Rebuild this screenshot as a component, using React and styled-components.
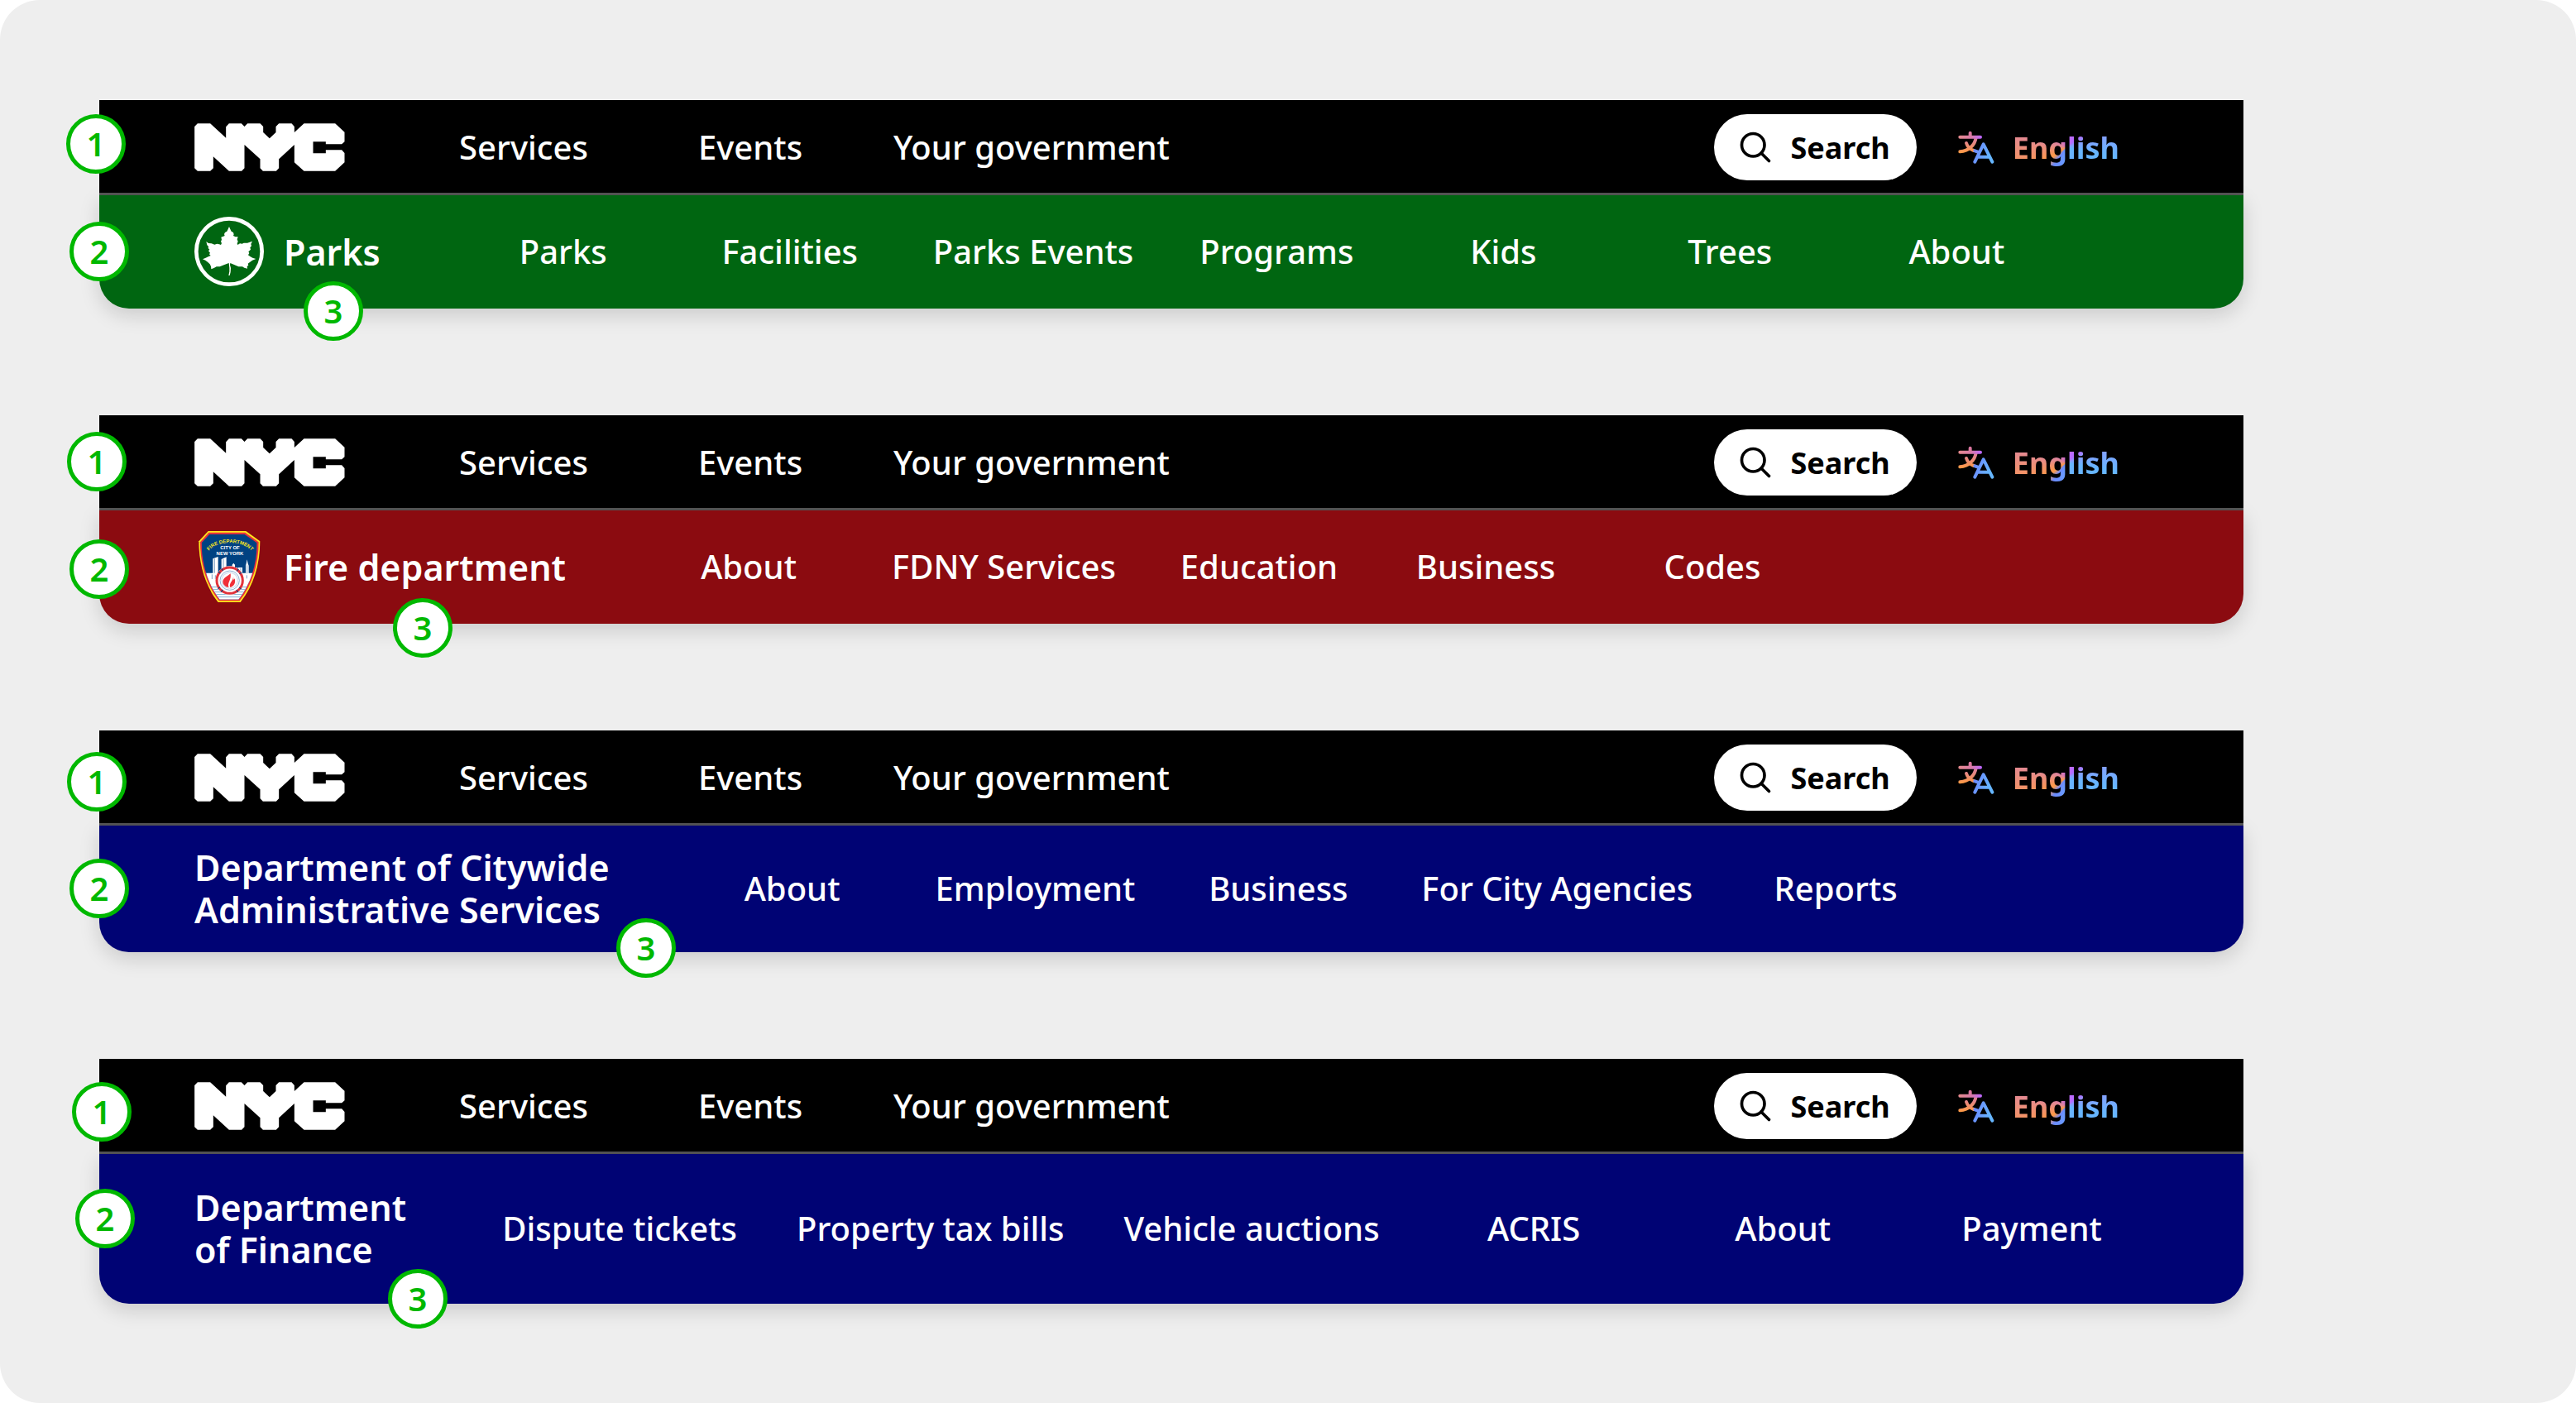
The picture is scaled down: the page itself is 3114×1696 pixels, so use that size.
import React from 'react';
import styled, { createGlobalStyle } from 'styled-components';

const agencies = [
  {
    name: ['Parks'],
    emblem: 'parks',
    color: '#006611',
    height: 137,
    links: ['Parks', 'Facilities', 'Parks Events', 'Programs', 'Kids', 'Trees', 'About'],
    markers: [[-40, 17], [-36, 147], [247, 219]],
  },
  {
    name: ['Fire department'],
    emblem: 'fire',
    color: '#8b0b10',
    height: 137,
    links: ['About', 'FDNY Services', 'Education', 'Business', 'Codes'],
    markers: [[-39, 20], [-36, 150], [355, 221]],
  },
  {
    name: ['Department of Citywide', 'Administrative Services'],
    color: '#000374',
    height: 153,
    links: ['About', 'Employment', 'Business', 'For City Agencies', 'Reports'],
    markers: [[-39, 26], [-36, 155], [625, 227]],
  },
  {
    name: ['Department', 'of Finance'],
    color: '#000374',
    height: 181,
    gap: 80,
    cell: 301,
    links: ['Dispute tickets', 'Property tax bills', 'Vehicle auctions', 'ACRIS', 'About', 'Payment'],
    markers: [[-33, 28], [-29, 157], [349, 254]],
  },
];

const NycLogo = () => (
  <svg width="182" height="58" viewBox="46 57 545 174" role="img" aria-label="NYC">
    <path
      fill="#fff"
      d="M57 58H103L160 110V70L171 58H216L227 69L238 58H284L295 69V90L318 112L341 90V69L352 58H398L408 69V90L443 58H556L590 89V124L580 133H522V124H476V166H522V154H580L590 165V199L556 230H443L408 199V135L352 187V220L342 230H294L284 220V187L227 135V220L217 230H171L114 178V220L103 230H57L46 220V69Z"
    />
  </svg>
);

const SearchIcon = () => (
  <svg width="44" height="44" viewBox="0 0 24 24" fill="none" stroke="#000" strokeWidth="2" strokeLinecap="round">
    <circle cx="10.5" cy="10.5" r="7.5" />
    <path d="M21 21l-5.2-5.2" />
  </svg>
);

const TranslateIcon = () => (
  <svg width="44" height="40" viewBox="76 52 132 120" fill="none" strokeWidth="12" strokeLinecap="round" strokeLinejoin="round">
    <defs>
      <linearGradient id="warm" gradientUnits="userSpaceOnUse" x1="112" y1="60" x2="112" y2="132">
        <stop offset="0" stopColor="#d9749f" />
        <stop offset="0.4" stopColor="#e0828f" />
        <stop offset="1" stopColor="#ff9a45" />
      </linearGradient>
      <linearGradient id="bar" gradientUnits="userSpaceOnUse" x1="80" y1="60" x2="162" y2="75">
        <stop offset="0" stopColor="#e58a8c" />
        <stop offset="0.55" stopColor="#d87aa8" />
        <stop offset="1" stopColor="#bb66ff" />
      </linearGradient>
      <linearGradient id="cool" gradientUnits="userSpaceOnUse" x1="135" y1="130" x2="190" y2="150">
        <stop offset="0" stopColor="#6b8bff" />
        <stop offset="1" stopColor="#66b6ff" />
      </linearGradient>
    </defs>
    <path stroke="url(#warm)" d="M120 60V73M141 77C137 103 116 126 83 128M106 97C110 110 119 119 133 124" />
    <path stroke="url(#bar)" d="M83 75H157" />
    <path stroke="url(#cool)" d="M137 125L148 129M137 165L168 101L200 165M149 147H188" />
  </svg>
);

const ParksEmblem = () => (
  <svg width="84" height="84" viewBox="48 39 252 252" role="img" aria-label="Parks emblem">
    <circle cx="174" cy="165" r="119" fill="none" stroke="#fff" strokeWidth="14" />
    <path
      fill="#fff"
      d="M174 75L178 84L182 92L189 96L191 103L189 108L197 112L206 112L203 121L206 129L203 136L205 141L213 136L221 137L227 134L240 134L258 128L253 138L255 145L250 151L252 158L244 166L247 171L243 178L250 183L259 188L271 192L258 197L250 203L242 209L244 215L239 219L240 227L229 224L222 220L208 220L194 214L178 207L177 214L180 225L179 240L176 252L172 252L175 238L175 224L173 207L155 214L140 220L128 220L119 225L109 229L108 219L104 211L96 203L88 197L78 193L89 188L98 184L107 180L102 175L105 170L99 163L103 158L98 153L99 147L94 142L91 129L99 135L110 136L121 140L130 137L138 139L144 141L147 135L144 129L147 122L145 113L153 110L158 108L156 102L159 96L166 92L170 84Z"
    />
  </svg>
);

const FireEmblem = () => (
  <svg width="84" height="86" viewBox="48 36 252 258" role="img" aria-label="Fire department shield">
    <defs>
      <clipPath id="shield">
        <path d="M103 47H229L275 79C275 155 252 230 208 284H140C97 230 74 155 74 79Z" />
      </clipPath>
      <path id="arch" d="M96 116C118 66 234 66 260 116" />
    </defs>
    <path fill="#ffe81a" d="M98 36H235L286 73C286 158 262 236 215 294H134C88 236 64 158 64 73Z" />
    <path fill="#e8323c" d="M100 41H232L281 76C281 157 257 233 212 289H137C92 233 69 157 69 76Z" />
    <g clipPath="url(#shield)">
      <path fill="#004282" d="M60 36H290V294H60Z" />
      <path fill="#fff" d="M60 188H290V294H60Z" />
      <path fill="#fff" d="M115 136L134 129V190H115ZM146 138L164 130V190H146ZM185 158L190 152L195 158V168H205V190H178V164H185ZM207 168H222V190H207ZM236 154L239 139L242 154L245 161V192H234V161Z" />
      <path fill="none" stroke="#7d9fc4" strokeWidth="3" d="M121 136V188M153 138V188M216 170V188M239 160V190M112 193V210M124 196V210M238 196V208" />
      <path fill="none" stroke="#7eb0d2" strokeWidth="3" d="M90 239H262M92 248H258M98 257H252M108 266H244M114 275H236" />
      <circle cx="176" cy="215" r="52" fill="#fff" />
      <circle cx="176" cy="215" r="47" fill="none" stroke="#e1343c" strokeWidth="9" />
      <circle cx="176" cy="215" r="47" fill="none" stroke="#004282" strokeWidth="10" strokeDasharray="3 12 3 55.8" strokeDashoffset="-28" />
      <circle cx="176" cy="215" r="35" fill="none" stroke="#8eb4d6" strokeWidth="3" />
      <circle cx="176" cy="215" r="29" fill="none" stroke="#d5e1ee" strokeWidth="4" />
      <path fill="#f02f38" d="M179 190C166 201 153 205 151 219C151 230 161 240 173 240C165 226 183 213 179 190Z" />
      <path fill="#f02f38" d="M189 200C190 216 171 225 178 240C191 237 199 224 194 208L190 213Z" />
    </g>
    <g fontFamily="Liberation Sans, Arial, sans-serif" fontWeight="700" textAnchor="middle">
      <text fill="#ffe81a" fontSize="18">
        <textPath href="#arch" startOffset="50%">FIRE DEPARTMENT</textPath>
      </text>
      <text fill="#fff" fontSize="18" x="177" y="101">CITY OF</text>
      <text fill="#fff" fontSize="18" x="177" y="123">NEW YORK</text>
    </g>
  </svg>
);

const emblems = { parks: ParksEmblem, fire: FireEmblem };

const Header = ({ agency }) => {
  const Emblem = emblems[agency.emblem];
  return (
    <Panel>
      <TopBar>
        <HomeLink href="#"><NycLogo /></HomeLink>
        <Nav aria-label="City">
          {['Services', 'Events', 'Your government'].map(label => (
            <NavLink key={label} href="#">{label}</NavLink>
          ))}
        </Nav>
        <Tools>
          <SearchButton type="button"><SearchIcon />Search</SearchButton>
          <LanguageButton type="button">
            <TranslateIcon />
            <LanguageName>English</LanguageName>
          </LanguageButton>
        </Tools>
      </TopBar>
      <AgencyBar $color={agency.color} $height={agency.height} $gap={agency.gap}>
        <Brand href="#">
          {Emblem && <Emblem />}
          <span>
            {agency.name.map(line => <BrandLine key={line}>{line}</BrandLine>)}
          </span>
        </Brand>
        <Nav aria-label={agency.name.join(' ')}>
          {agency.links.map(label => (
            <NavLink key={label} href="#" $cell={agency.cell}>{label}</NavLink>
          ))}
        </Nav>
      </AgencyBar>
      {agency.markers.map(([x, y], index) => (
        <Marker key={index} $x={x} $y={y}>{index + 1}</Marker>
      ))}
    </Panel>
  );
};

const App = () => (
  <>
    <GlobalStyle />
    <Board>
      {agencies.map(agency => <Header key={agency.name[0]} agency={agency} />)}
    </Board>
  </>
);

const GlobalStyle = createGlobalStyle`
  * {
    box-sizing: border-box;
  }

  body {
    margin: 0;
    background: #fff;
    font-family: "Noto Sans", sans-serif;
  }

  svg {
    display: block;
    flex: none;
  }
`;

const Board = styled.main`
  display: flex;
  flex-direction: column;
  gap: 129px;
  padding: 121px 402px 120px 120px;
  background: #eee;
  border-radius: 48px;
`;

const Panel = styled.header`
  position: relative;
`;

const TopBar = styled.div`
  display: flex;
  align-items: center;
  gap: 79px;
  min-height: 115px;
  padding: 0 118px 1px 115px;
  background: #000;
  box-shadow: inset 0 -3px #555;
`;

const AgencyBar = styled.div`
  display: flex;
  align-items: center;
  gap: ${props => props.$gap || 84}px;
  min-height: ${props => props.$height}px;
  padding: 0 0 1px 115px;
  background: ${props => props.$color};
  border-radius: 0 0 36px 36px;
  box-shadow: 0 8px 24px rgba(0, 0, 0, 0.15);
`;

const HomeLink = styled.a`
  flex: none;
`;

const Nav = styled.nav`
  display: flex;
`;

const NavLink = styled.a`
  min-width: ${props => props.$cell || 274}px;
  padding: 0 36px;
  color: #fff;
  font-size: 40px;
  font-weight: 500;
  line-height: 56px;
  text-align: center;
  text-decoration: none;
  white-space: nowrap;
`;

const Tools = styled.div`
  display: flex;
  align-items: center;
  gap: 18px;
  margin-left: auto;
`;

const ToolButton = styled.button`
  display: flex;
  align-items: center;
  height: 80px;
  border: 0;
  border-radius: 40px;
  font-family: inherit;
  font-size: 36px;
  font-weight: 700;
  cursor: pointer;
`;

const SearchButton = styled(ToolButton)`
  gap: 20px;
  padding: 0 32px 0 28px;
  background: #fff;
  color: #000;
`;

const LanguageButton = styled(ToolButton)`
  gap: 22px;
  padding: 0 32px;
  background: none;
`;

const LanguageName = styled.span`
  background: conic-gradient(
    at 50% 50%,
    #c86bff 0deg,
    #b56cff 50deg,
    #8a9cff 68deg,
    #66b6ff 100deg,
    #6ab4ff 150deg,
    #6a8aff 215deg,
    #ff9a45 235deg,
    #e58a90 282deg,
    #d070c8 340deg,
    #c86bff 360deg
  );
  background-clip: text;
  color: transparent;
`;

const Brand = styled.a`
  display: flex;
  align-items: center;
  gap: 24px;
  flex: none;
  color: #fff;
  text-decoration: none;
`;

const BrandLine = styled.span`
  display: block;
  font-size: 43px;
  font-weight: 600;
  line-height: 51px;
  white-space: nowrap;
`;

const Marker = styled.span`
  position: absolute;
  left: ${props => props.$x}px;
  top: ${props => props.$y}px;
  display: flex;
  align-items: center;
  justify-content: center;
  width: 72px;
  height: 72px;
  border: 5px solid #00b800;
  border-radius: 50%;
  background: #fff;
  color: #00b800;
  font-size: 40px;
  font-weight: 600;
  line-height: 56px;
`;

export default App;
